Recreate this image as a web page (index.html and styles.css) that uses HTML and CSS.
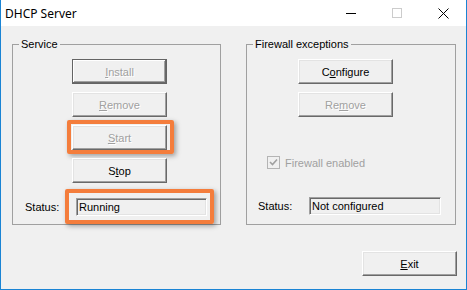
FILE: index.html
```html
<!DOCTYPE html>
<html>
    <head>
        <meta charset = utf-8>
        <title>DHCP Server</title>
        <link rel="stylesheet" href="styles.css">
    </head>

    <body>
        <div class = window>
            <div class = titlebar>
                <span class = title>DHCP Server</span>
                <span class = caption>
                    <svg width = 10 height = 10 viewBox = "0 0 10 10"><path d = "M0 5.5h10" stroke = "#000" /></svg>
                </span>
                <span class = caption>
                    <svg width = 10 height = 10 viewBox = "0 0 10 10"><rect x = .5 y = .5 width = 9 height = 9 fill = none stroke = "#ccc" /></svg>
                </span>
                <span class = caption>
                    <svg width = 11 height = 11 viewBox = "0 0 11 11"><path d = "M.5 .5l10 10M10.5 .5l-10 10" stroke = "#000" /></svg>
                </span>
            </div>

            <div class = client>
                <div class = groups>
                    <fieldset class = "group service">
                        <legend>Service</legend>
                        <div class = buttons>
                            <button class = default disabled><u>I</u>nstall</button>
                            <button disabled><u>R</u>emove</button>
                            <div class = "mark mark-button">
                                <button disabled><u>S</u>tart</button>
                            </div>
                            <button>S<u>t</u>op</button>
                        </div>
                        <div class = status>
                            <span class = label>Status:</span>
                            <div class = "mark mark-field">
                                <div class = field>Running</div>
                            </div>
                        </div>
                    </fieldset>

                    <fieldset class = "group firewall">
                        <legend>Firewall exceptions</legend>
                        <div class = buttons>
                            <button>C<u>o</u>nfigure</button>
                            <button disabled>Re<u>m</u>ove</button>
                        </div>
                        <div class = check>
                            <span class = box>
                                <svg width = 9 height = 9 viewBox = "0 0 9 9"><path d = "M1 4l2.5 2.5L8 1.5" fill = none stroke = "#a0a0a0" stroke-width = 1.6 /></svg>
                            </span>
                            <span class = check-label>Firewall enabled</span>
                        </div>
                        <div class = status>
                            <span class = label>Status:</span>
                            <div class = field>Not configured</div>
                        </div>
                    </fieldset>
                </div>

                <div class = footer>
                    <button><u>E</u>xit</button>
                </div>
            </div>
        </div>
    </body>
</html>
```

FILE: styles.css
```css
html {
    background-color: #fff;
}

body {
    margin: 0;
    font-family: "Liberation Sans", Arial, sans-serif;
    font-size: 11px;
    color: #000
}

.window {
    width: 465px;
    height: 289px;
    border: 1px solid #1a84d4;
    border-top: none;
    display: flex;
    flex-direction: column
}

.titlebar {
    height: 26px;
    display: flex;
    align-items: center;
    background: #fff
}

.title {
    flex: 1;
    padding-left: 4px;
    font-family: "Noto Sans", sans-serif;
    font-size: 12px
}

.caption {
    width: 46px;
    height: 26px;
    display: flex;
    align-items: center;
    justify-content: center
}

.client {
    flex: 1;
    background: #f0f0f0;
    padding: 12px 9px 0 11px
}

.groups {
    display: flex;
    gap: 25px
}

.group {
    margin: 0;
    padding: 0;
    height: 187px;
    box-sizing: border-box;
    border: 1px solid #a0a0a0
}

.group legend {
    margin-left: 6px;
    padding: 0 2px;
    line-height: 13px
}

.service {width: 209px}
.firewall {width: 210px}

.buttons {
    display: flex;
    flex-direction: column;
    align-items: flex-start;
    gap: 8px;
    margin-top: 8px
}

.service .buttons {margin-left: 59px}
.firewall .buttons {margin-left: 51px}

button {
    width: 95px;
    height: 25px;
    padding: 0;
    font: inherit;
    color: #000;
    background: #f0f0f0;
    border: 1px solid;
    border-color: #fff #696969 #696969 #fff;
    box-shadow: inset -1px -1px #a0a0a0, inset 1px 1px #e3e3e3
}

button:disabled {
    color: #a0a0a0;
    text-shadow: 1px 1px 0 #fff
}

button.default {
    border-color: #646464;
    box-shadow: inset -1px -1px #696969, inset 1px 1px #fff, inset -2px -2px #a0a0a0
}

.mark {
    border: 4px solid #f47d3c;
    border-radius: 2px;
    box-shadow: 2px 2px 5px rgba(0, 0, 0, .35)
}

.mark-button {
    margin: -5px -7px -4px -5px;
    padding: 1px 3px 0 1px
}

.mark-field {
    margin: -9px -7px -8px -11px;
    padding: 5px 3px 4px 7px
}

.status {
    display: flex;
    align-items: center;
    margin-top: 15px
}

.service .status {margin-left: 12px}
.firewall .status {margin-left: 11px; margin-top: 28px}

.label {width: 51px}

.field {
    width: 127px;
    height: 16px;
    line-height: 16px;
    padding-left: 2px;
    border: 1px solid;
    border-color: #a0a0a0 #fff #fff #a0a0a0;
    box-shadow: inset 1px 1px #696969, inset -1px -1px #e3e3e3
}

.firewall .field {width: 128px}

.check {
    display: flex;
    align-items: center;
    gap: 5px;
    margin: 39px 0 0 20px;
    color: #a0a0a0
}

.box {
    width: 11px;
    height: 11px;
    border: 1px solid #b4b4b4;
    display: flex;
    align-items: center;
    justify-content: center
}

.footer {
    display: flex;
    justify-content: flex-end;
    margin-top: 26px
}
```
